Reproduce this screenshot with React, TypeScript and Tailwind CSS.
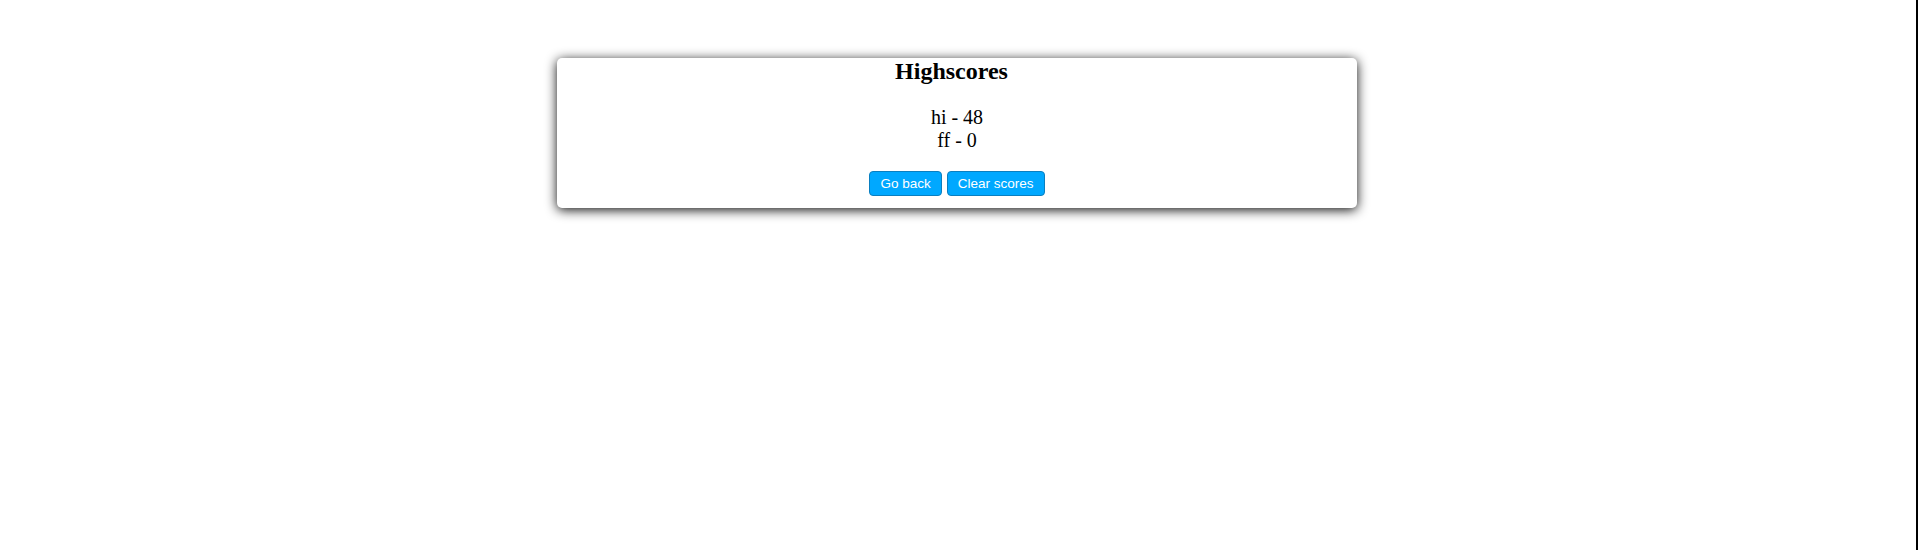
const scores = [
  { name: "hi", score: 48 },
  { name: "ff", score: 0 },
];

export default function App() {
  return (
    <div className="flex min-h-[550px] w-full bg-white">
      <div className="flex flex-1 justify-center items-start pt-[58px] pr-[2px]">
        <div className="w-[800px] rounded-[5px] bg-white pb-[12px] text-center text-black shadow-[0_2px_12px_rgba(0,0,0,0.95)] font-['Liberation_Serif',serif]">
          <h2 className="m-0 pr-[11px] text-[24px] font-bold leading-[1.15]">Highscores</h2>

          <div className="mt-[20px] text-[20px] leading-[1.15]">
            {scores.map((s) => (
              <div key={s.name}>
                {s.name} - {s.score}
              </div>
            ))}
          </div>

          <div className="mt-[19px] flex justify-center gap-[5px]">
            <button className="h-[25px] rounded-[4px] border border-[#0a7fc0] bg-[#00a8ff] px-[10px] pt-[1px] text-[13.5px] leading-none text-white font-['Liberation_Sans',Arial,sans-serif]">
              Go back
            </button>
            <button className="h-[25px] rounded-[4px] border border-[#0a7fc0] bg-[#00a8ff] px-[10px] pt-[1px] text-[13.5px] leading-none text-white font-['Liberation_Sans',Arial,sans-serif]">
              Clear scores
            </button>
          </div>
        </div>
      </div>
      <div className="w-[2px] bg-black" />
    </div>
  );
}
